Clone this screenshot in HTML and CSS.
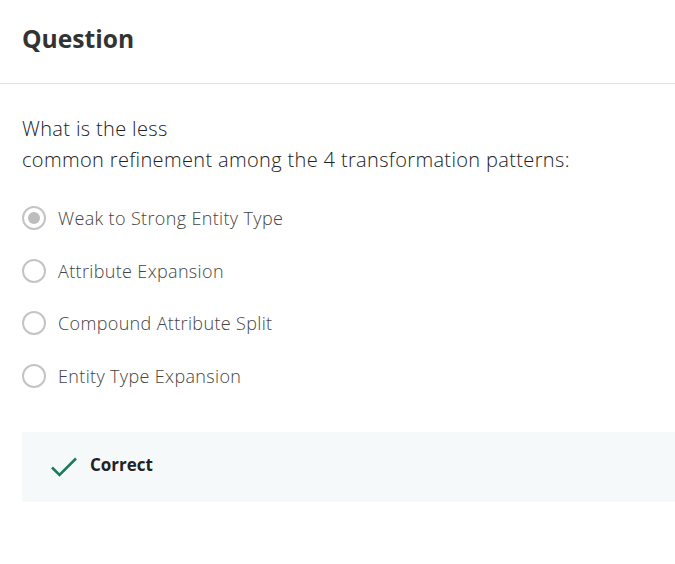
FILE: index.html
```html
<!DOCTYPE html>
<html>
<head>
<meta charset="utf-8">
<link rel="stylesheet" href="styles.css">
</head>
<body>
<div class="page">
  <header class="header">
    <h1 class="title">Question</h1>
  </header>
  <main class="body">
    <p class="prompt">What is the less<br>common refinement among the 4 transformation patterns:</p>
    <div class="options">
      <label class="option"><span class="radio checked"><span class="dot"></span></span><span class="label">Weak to Strong Entity Type</span></label>
      <label class="option"><span class="radio"></span><span class="label">Attribute Expansion</span></label>
      <label class="option"><span class="radio"></span><span class="label">Compound Attribute Split</span></label>
      <label class="option"><span class="radio"></span><span class="label">Entity Type Expansion</span></label>
    </div>
    <div class="feedback">
      <svg class="check" width="28" height="22" viewBox="0 0 28 22"><path d="M2 11.5 L9.5 19 L26 2.5" fill="none" stroke="#1e7a5a" stroke-width="2.6"/></svg>
      <span class="feedback-text">Correct</span>
    </div>
  </main>
</div>
</body>
</html>
```

FILE: styles.css
```css
* { box-sizing: border-box; }
html, body { margin: 0; padding: 0; background: #fff; }
body { font-family: "Open Sans", "Noto Sans", sans-serif; color: #333; }
.page { width: 675px; }
.header {
  height: 84px;
  padding: 22px 22px 0;
  border-bottom: 1px solid #e2e2e2;
}
.title {
  margin: 0;
  font-size: 24.6px;
  font-weight: 700;
  line-height: 34px;
  color: #333;
}
.body { padding: 29px 0 0 22px; }
.prompt {
  margin: 0;
  font-size: 20px;
  font-weight: 300;
  line-height: 31px;
  letter-spacing: 0.35px;
  color: #222;
}
.options {
  margin-top: 31px;
  display: flex;
  flex-direction: column;
  gap: 28.5px;
}
.option {
  display: flex;
  align-items: center;
  height: 24px;
}
.radio {
  width: 24px;
  height: 24px;
  border: 2px solid #c4c4c4;
  border-radius: 50%;
  display: flex;
  align-items: center;
  justify-content: center;
  flex: none;
}
.dot {
  width: 12px;
  height: 12px;
  border-radius: 50%;
  background: #bdbdbd;
}
.label {
  margin-left: 12px;
  font-size: 18px;
  font-weight: 300;
  letter-spacing: 0.35px;
  color: #444;
}
.feedback {
  margin-top: 44px;
  height: 70px;
  background: #f6f9f9;
  display: flex;
  align-items: center;
  padding-left: 28px;
}
.check { flex: none; }
.feedback-text {
  margin-left: 12px;
  margin-bottom: 4px;
  font-size: 17px;
  font-weight: 700;
  color: #222;
}
```
